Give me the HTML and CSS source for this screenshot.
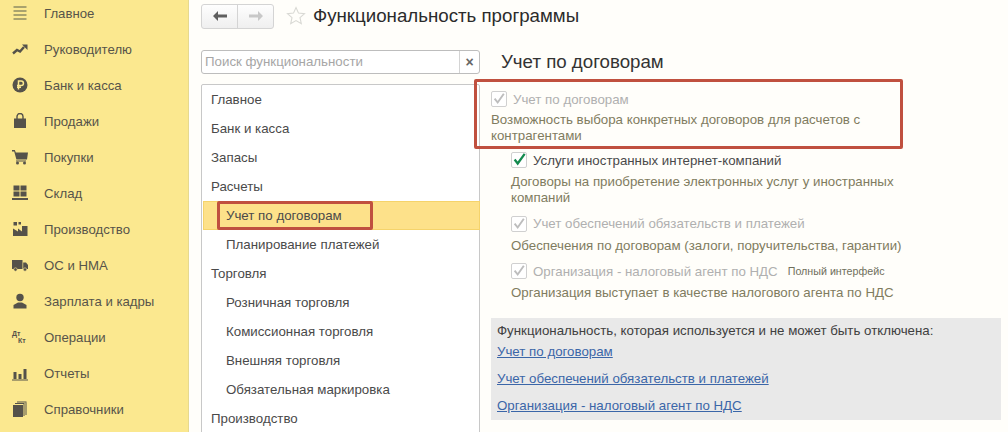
FILE: index.html
```html
<!DOCTYPE html>
<html lang="ru">
<head>
<meta charset="utf-8">
<title>Функциональность программы</title>
<link rel="stylesheet" href="styles.css">
</head>
<body>
<div class="app">
  <nav class="sidebar">
    <div class="nav-item"><svg class="ico" viewBox="0 0 16 16"><path d="M1.500 2h13M1.500 6h13M1.500 10h13M1.500 14h13" stroke="#8f8a63" stroke-width="1.400" fill="none"/></svg><span>Главное</span></div>
    <div class="nav-item"><svg class="ico" viewBox="0 0 16 16"><path d="M1 12.500l4-3.500 3 1.500 4-4.500" stroke="#55524a" stroke-width="2.400" fill="none"/><path d="M10 3.500h5.500V9z" fill="#55524a"/></svg><span>Руководителю</span></div>
    <div class="nav-item"><svg class="ico" viewBox="0 0 16 16"><circle cx="8" cy="8" r="7.500" fill="#55524a"/><path d="M6.500 12.500V4h2.700a2.200 2.200 0 0 1 0 4.500H5M5 10.300h4" stroke="#fbe88f" stroke-width="1.500" fill="none"/></svg><span>Банк и касса</span></div>
    <div class="nav-item"><svg class="ico" viewBox="0 0 16 16"><path d="M2 5.500h12V15H2z" fill="#55524a"/><path d="M5 7.500V3.500a3 3 0 0 1 6 0v4" stroke="#55524a" stroke-width="1.400" fill="none"/></svg><span>Продажи</span></div>
    <div class="nav-item"><svg class="ico" viewBox="0 0 16 16"><path d="M0 1h2.800l1 2.500H16l-1 7H4.400L2.200 2.400H0z" fill="#55524a"/><path d="M4 11.500h10v1H4z" fill="#55524a"/><circle cx="5.500" cy="14" r="1.500" fill="#55524a"/><circle cx="12.500" cy="14" r="1.500" fill="#55524a"/></svg><span>Покупки</span></div>
    <div class="nav-item"><svg class="ico" viewBox="0 0 16 16"><path d="M1.500 .5h6v5h-6zM8.500 .5h6v5h-6zM1.500 6.500h6v5h-6zM8.500 6.500h6v5h-6zM0 13h16v2H0z" fill="#55524a"/></svg><span>Склад</span></div>
    <div class="nav-item"><svg class="ico" viewBox="0 0 16 16"><path d="M1 15V7.500l5 3V7.500l4 3V5h5.500v10z" fill="#55524a"/><path d="M1.500 1h3.500v3.500H1.500zM6.500 1H9v2.500H6.500z" fill="#55524a"/></svg><span>Производство</span></div>
    <div class="nav-item"><svg class="ico" viewBox="0 0 16 16"><path d="M0 3h10.500v9H0zM11.200 5.500h2.800l2 2.500v4h-4.800z" fill="#55524a"/><circle cx="3.500" cy="12.500" r="1.700" fill="#55524a" stroke="#fbe88f" stroke-width=".6"/><circle cx="13" cy="12.500" r="1.700" fill="#55524a" stroke="#fbe88f" stroke-width=".6"/></svg><span>ОС и НМА</span></div>
    <div class="nav-item"><svg class="ico" viewBox="0 0 16 16"><circle cx="8" cy="4.500" r="3.700" fill="#55524a"/><path d="M1.500 15.500V12l4.500-2.500h4l4.500 2.500v3.500z" fill="#55524a"/></svg><span>Зарплата и кадры</span></div>
    <div class="nav-item"><span class="dtkt"><b>Дт</b><b class="kt">Кт</b></span><span>Операции</span></div>
    <div class="nav-item"><svg class="ico" viewBox="0 0 16 16"><path d="M1.500 7h3v7h-3zM6.500 9h3v5h-3zM11.500 4h3v10h-3zM0 14.500h16v1H0z" fill="#55524a"/></svg><span>Отчеты</span></div>
    <div class="nav-item"><svg class="ico" viewBox="0 0 16 16"><path d="M1 4h10v12H1z" fill="#55524a"/><path d="M12 3v12M14 1.500V14M3 2.500h9.500M5 1h9.500" stroke="#55524a" stroke-width="1" fill="none"/></svg><span>Справочники</span></div>
  </nav>
  <main class="content">
    <header class="toolbar">
      <div class="nav-buttons">
        <div class="nav-btn"><svg width="14" height="10" viewBox="0 0 14 10"><path d="M0 5l5-5v3.500h9v3H5V10z" fill="#5f5f5f"/></svg></div>
        <div class="nav-btn"><svg width="14" height="10" viewBox="0 0 14 10"><path d="M14 5L9 0v3.500H0v3h9V10z" fill="#c8c8c8"/></svg></div>
      </div>
      <svg class="star" width="20" height="20" viewBox="0 0 20 20"><path d="M10 1.500l2.500 5.600 6 .6-4.500 4 1.300 6L10 14.600l-5.300 3.100 1.300-6-4.500-4 6-.6z" fill="none" stroke="#d9d9d4" stroke-width="1.100"/></svg>
      <h1 class="title">Функциональность программы</h1>
    </header>
    <div class="panes">
      <section class="left">
        <div class="search">
          <div class="search-input">Поиск функциональности</div>
          <div class="search-clear">×</div>
        </div>
        <ul class="tree">
          <li>Главное</li>
          <li>Банк и касса</li>
          <li>Запасы</li>
          <li>Расчеты</li>
          <li class="sub selected"><span class="mark">Учет по договорам</span></li>
          <li class="sub">Планирование платежей</li>
          <li>Торговля</li>
          <li class="sub">Розничная торговля</li>
          <li class="sub">Комиссионная торговля</li>
          <li class="sub">Внешняя торговля</li>
          <li class="sub">Обязательная маркировка</li>
          <li>Производство</li>
        </ul>
      </section>
      <section class="right">
        <h2 class="heading">Учет по договорам</h2>
        <div class="feature first">
          <div class="check-row dis"><span class="box"><svg viewBox="0 0 16 16"><path d="M3 7.500l3.500 4.500L13.500 2" fill="none" stroke="#bdbdbd" stroke-width="2.200"/></svg></span>Учет по договорам</div>
          <p class="desc">Возможность выбора конкретных договоров для расчетов с контрагентами</p>
          <div class="redbox"></div>
        </div>
        <div class="feature nested">
          <div class="check-row on"><span class="box"><svg viewBox="0 0 16 16"><path d="M3 7.500l3.500 4.500L14.500 1" fill="none" stroke="#138a4e" stroke-width="2.600"/></svg></span>Услуги иностранных интернет-компаний</div>
          <p class="desc">Договоры на приобретение электронных услуг у иностранных компаний</p>
        </div>
        <div class="feature nested">
          <div class="check-row dis"><span class="box"><svg viewBox="0 0 16 16"><path d="M3 7.500l3.500 4.500L13.500 2" fill="none" stroke="#bdbdbd" stroke-width="2.200"/></svg></span>Учет обеспечений обязательств и платежей</div>
          <p class="desc">Обеспечения по договорам (залоги, поручительства, гарантии)</p>
        </div>
        <div class="feature nested">
          <div class="check-row dis"><span class="box"><svg viewBox="0 0 16 16"><path d="M3 7.500l3.500 4.500L13.500 2" fill="none" stroke="#bdbdbd" stroke-width="2.200"/></svg></span>Организация - налоговый агент по НДС<small class="hint">Полный интерфейс</small></div>
          <p class="desc">Организация выступает в качестве налогового агента по НДС</p>
        </div>
        <div class="locked">
          <div class="locked-title">Функциональность, которая используется и не может быть отключена:</div>
          <a href="#">Учет по договорам</a>
          <a href="#">Учет обеспечений обязательств и платежей</a>
          <a href="#">Организация - налоговый агент по НДС</a>
        </div>
      </section>
    </div>
  </main>
</div>
</body>
</html>
```
FILE: styles.css
```css
*, *::after { box-sizing: border-box; }
html, body { margin: 0; height: 100%; }
body { font-family: "Liberation Sans", Arial, sans-serif; background: #fff; overflow: hidden; }
.app { display: flex; width: 1008px; height: 432px; overflow: hidden; }

.sidebar { width: 189px; flex: none; background: #fbe88f; border-right: 1px solid #e6d98f; }
.nav-item { height: 36px; display: flex; align-items: center; gap: 16px; padding-left: 12px; font-size: 13.200px; color: #57544a; }
.sidebar .nav-item:first-child { margin-top: -5px; }
.ico { width: 16px; height: 16px; flex: none; }
.dtkt { width: 16px; flex: none; display: flex; flex-direction: column; font-size: 7px; line-height: 7px; color: #55524a; }
.dtkt .kt { margin-left: 6px; }

.content { flex: 1; min-width: 0; padding: 3px 0 0 12px; background: #fffefa; }
.toolbar { display: flex; align-items: center; height: 26px; }
.nav-buttons { display: flex; width: 73px; height: 25px; border: 1px solid #d4d4d4; border-radius: 3px; background: linear-gradient(#fefefe, #efefef); }
.nav-btn { flex: 1; display: flex; align-items: center; justify-content: center; }
.nav-btn + .nav-btn { border-left: 1px solid #d4d4d4; }
.star { margin-left: 12px; flex: none; }
.title { margin: 0 0 0 7px; font-size: 18.700px; font-weight: 400; color: #2b2b2b; }

.panes { display: flex; margin-top: 21px; }
.left { width: 279px; flex: none; }
.search { display: flex; height: 24px; border: 1px solid #bdbdbd; border-radius: 3px; background: #fff; }
.search-input { flex: 1; padding-left: 3px; font-size: 13.300px; line-height: 22px; color: #a6a6a6; }
.search-clear { width: 20px; border-left: 1px solid #d4d4d4; text-align: center; font-size: 14px; line-height: 22px; font-weight: 700; color: #666; }
.tree { margin: 10px 0 0; padding: 0; list-style: none; height: 400px; border: 1px solid #c8c8c8; border-radius: 2px 2px 0 0; background: #fff; }
.tree li { height: 29px; line-height: 29px; padding-left: 9px; font-size: 13.300px; color: #4a4a4a; white-space: nowrap; }
.tree li.sub { padding-left: 24px; }
.tree li.selected { background: #fde18a; border: 1px solid #f5d36b; line-height: 27px; padding-left: 22px; margin: 0 -1px 0 1px; position: relative; }
.mark { position: relative; display: inline-block; }
.mark::after { content: ""; position: absolute; left: -9px; top: -1px; width: 156px; height: 29px; border: 3px solid #c0503f; border-radius: 2px; }

.right { flex: 1; min-width: 0; padding: 0 7px 0 11px; }
.heading { margin: 0 0 0 10px; height: 37px; line-height: 23px; font-size: 18.700px; font-weight: 400; color: #333; }
.feature { position: relative; }
.desc { margin: 0; font-size: 13.300px; line-height: 16px; color: #7f7c60; max-width: 400px; }
.first { height: 61px; }
.first .desc { margin-top: 1px; }
.nested { padding-left: 20px; }
.check-row { display: flex; align-items: center; height: 24px; font-size: 13.300px; white-space: nowrap; }
.box { width: 16px; height: 16px; margin-right: 6px; border: 1px solid #d0d0d0; border-radius: 2px; background: #fff; flex: none; }
.box svg { display: block; width: 14px; height: 14px; overflow: visible; }
.dis { color: #b0b0b0; }
.on { color: #4a4a4a; }
.hint { margin-left: 10px; font-size: 10.700px; color: #6f6f5c; }
.redbox { position: absolute; left: -17px; top: -8px; width: 429px; height: 70px; border: 3px solid #c0503f; border-radius: 2px; }
.nested .check-row { margin-bottom: 2px; }
.nested .desc { margin-bottom: 5.500px; }

.locked { margin-top: 17px; width: 510px; height: 102px; padding: 5px 6px; background: #e9e9e9; font-size: 13.300px; }
.locked-title { color: #404040; line-height: 16px; margin-bottom: 3px; }
.locked a { display: block; height: 27px; line-height: 20px; color: #3b66a8; text-decoration: underline; }
```
